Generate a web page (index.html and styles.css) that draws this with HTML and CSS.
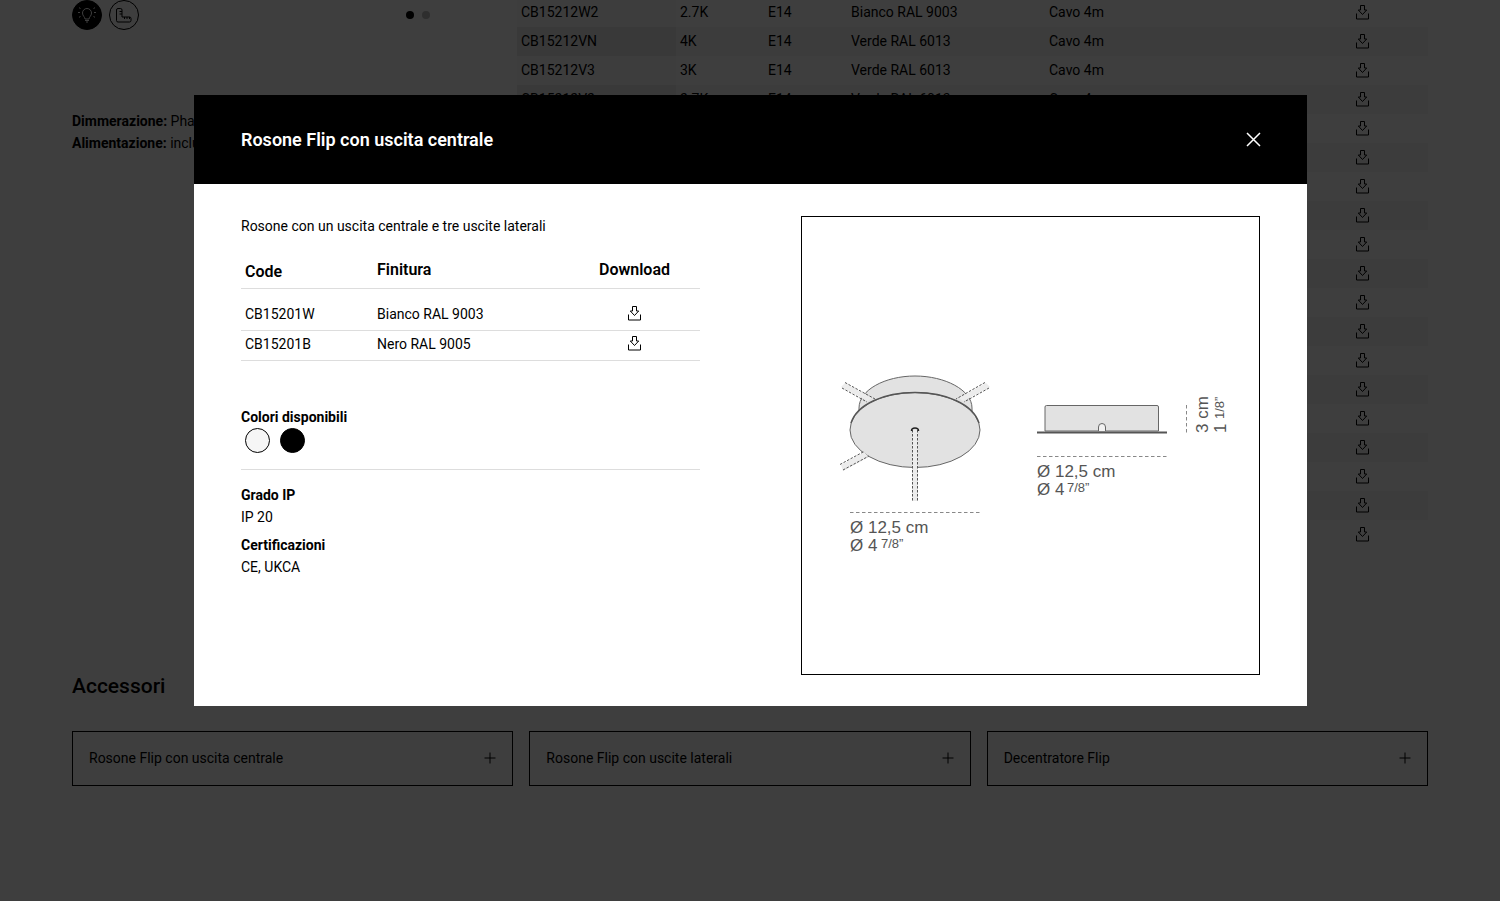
FILE: index.html
```html
<!DOCTYPE html>
<html lang="it">
<head>
<meta charset="utf-8">
<title>Flip – Accessori</title>
<link rel="stylesheet" href="styles.css">
</head>
<body>
<svg class="defs" aria-hidden="true">
  <symbol id="download" viewBox="0 0 15 17">
    <path d="M5.500 1.500h4v4.500h2.200L7.500 10.500 3.300 6h2.200zM1.500 9.500v5.500h12V9.500"/>
  </symbol>
  <symbol id="plus" viewBox="0 0 12 12"><path d="M6 0.500v11M0.500 6h11"/></symbol>
</svg>

<main class="page">
  <section class="product">
    <div class="gallery">
      <div class="controls">
        <button class="round round-on" aria-label="Foto">
          <svg viewBox="0 0 28 28"><path d="M12 18c0-2-2.500-3-2.500-6a4.500 4.500 0 0 1 9 0c0 3-2.500 4-2.500 6zM12 19.500h4M13 21h2M7.500 7.500l-1.500-.8M7 11.500H5M7.500 15.500l-1.500.8M20.500 7.500l1.500-.8M21 11.500h2M20.500 15.500l1.500.8"/></svg>
        </button>
        <button class="round" aria-label="Misure">
          <svg viewBox="0 0 28 28"><path d="M8 7.500h2.500q1.500 0 1.500 1.500v7h7.500q1.500 0 1.500 1.500v2q0 1.500-1.500 1.500h-11.500q-1.500 0-1.500-1.500v-10.500q0-1.500 1.500-1.500zM9.500 10.500h2.500M9.500 13h2.500M14.500 16v2M17 16v2M19.500 16v2"/></svg>
        </button>
        <div class="dots"><span class="dot dot-on"></span><span class="dot"></span></div>
      </div>
      <p class="specs"><b>Dimmerazione:</b> Phase cut<br><b>Alimentazione:</b> inclusa</p>
    </div>
    <table class="codes">
      <colgroup><col class="c-code"><col class="c-temp"><col class="c-base"><col class="c-fin"><col class="c-cable"><col class="c-dl"></colgroup>
      <tbody>
        <tr><td>CB15212W2</td><td>2.7K</td><td>E14</td><td>Bianco RAL 9003</td><td>Cavo 4m</td><td><svg class="dl"><use href="#download"/></svg></td></tr>
        <tr><td>CB15212VN</td><td>4K</td><td>E14</td><td>Verde RAL 6013</td><td>Cavo 4m</td><td><svg class="dl"><use href="#download"/></svg></td></tr>
        <tr><td>CB15212V3</td><td>3K</td><td>E14</td><td>Verde RAL 6013</td><td>Cavo 4m</td><td><svg class="dl"><use href="#download"/></svg></td></tr>
        <tr><td>CB15212V2</td><td>2.7K</td><td>E14</td><td>Verde RAL 6013</td><td>Cavo 4m</td><td><svg class="dl"><use href="#download"/></svg></td></tr>
        <tr><td></td><td></td><td></td><td></td><td></td><td><svg class="dl"><use href="#download"/></svg></td></tr>
        <tr><td></td><td></td><td></td><td></td><td></td><td><svg class="dl"><use href="#download"/></svg></td></tr>
        <tr><td></td><td></td><td></td><td></td><td></td><td><svg class="dl"><use href="#download"/></svg></td></tr>
        <tr><td></td><td></td><td></td><td></td><td></td><td><svg class="dl"><use href="#download"/></svg></td></tr>
        <tr><td></td><td></td><td></td><td></td><td></td><td><svg class="dl"><use href="#download"/></svg></td></tr>
        <tr><td></td><td></td><td></td><td></td><td></td><td><svg class="dl"><use href="#download"/></svg></td></tr>
        <tr><td></td><td></td><td></td><td></td><td></td><td><svg class="dl"><use href="#download"/></svg></td></tr>
        <tr><td></td><td></td><td></td><td></td><td></td><td><svg class="dl"><use href="#download"/></svg></td></tr>
        <tr><td></td><td></td><td></td><td></td><td></td><td><svg class="dl"><use href="#download"/></svg></td></tr>
        <tr><td></td><td></td><td></td><td></td><td></td><td><svg class="dl"><use href="#download"/></svg></td></tr>
        <tr><td></td><td></td><td></td><td></td><td></td><td><svg class="dl"><use href="#download"/></svg></td></tr>
        <tr><td></td><td></td><td></td><td></td><td></td><td><svg class="dl"><use href="#download"/></svg></td></tr>
        <tr><td></td><td></td><td></td><td></td><td></td><td><svg class="dl"><use href="#download"/></svg></td></tr>
        <tr><td></td><td></td><td></td><td></td><td></td><td><svg class="dl"><use href="#download"/></svg></td></tr>
        <tr><td></td><td></td><td></td><td></td><td></td><td><svg class="dl"><use href="#download"/></svg></td></tr>
      </tbody>
    </table>
  </section>

  <section>
    <h2 class="heading">Accessori</h2>
    <div class="cards">
      <button class="card">Rosone Flip con uscita centrale<svg class="plus"><use href="#plus"/></svg></button>
      <button class="card">Rosone Flip con uscite laterali<svg class="plus"><use href="#plus"/></svg></button>
      <button class="card">Decentratore Flip<svg class="plus"><use href="#plus"/></svg></button>
    </div>
  </section>
</main>

<div class="overlay">
  <div class="modal" role="dialog" aria-labelledby="modal-title">
    <header class="modal-head">
      <h3 class="modal-title" id="modal-title">Rosone Flip con uscita centrale</h3>
      <button class="close" aria-label="Chiudi"><svg viewBox="0 0 15 15"><path d="M1 1l13 13M14 1L1 14"/></svg></button>
    </header>
    <div class="modal-body">
      <div class="info">
        <p class="desc">Rosone con un uscita centrale e tre uscite laterali</p>
        <table class="variants">
          <thead><tr><th class="v-code">Code</th><th>Finitura</th><th class="v-dl">Download</th></tr></thead>
          <tbody>
            <tr><td>CB15201W</td><td>Bianco RAL 9003</td><td class="v-dl"><a href="#" aria-label="Scarica CB15201W"><svg class="dl"><use href="#download"/></svg></a></td></tr>
            <tr><td>CB15201B</td><td>Nero RAL 9005</td><td class="v-dl"><a href="#" aria-label="Scarica CB15201B"><svg class="dl"><use href="#download"/></svg></a></td></tr>
          </tbody>
        </table>
        <div class="colors">
          <b>Colori disponibili</b>
          <div class="swatches"><span class="swatch"></span><span class="swatch swatch-black"></span></div>
        </div>
        <dl class="facts">
          <dt>Grado IP</dt><dd>IP 20</dd>
          <dt>Certificazioni</dt><dd>CE, UKCA</dd>
        </dl>
      </div>
      <div class="figure">
        <svg class="drawing" viewBox="0 0 457 457" role="img" aria-label="Disegno tecnico">
          <g class="shape">
            <path d="M57 191C57 173 83 159 113 159s57 14 57 32v14H57z"/>
            <ellipse cx="113" cy="213" rx="65" ry="37.500"/>
          </g>
          <path class="rim" d="M49 206C55 187 82 175.500 113 175.500S171 187 177 206"/>
          <g class="cable">
            <path class="fill" d="M43 166l27 15-4 3-27-14zM184 166l-27 15 4 3 27-14zM39 248l23-13 5 5-26 14zM110 213h6v71h-6z"/>
            <path class="dash" d="M43 165.500L73 182M40 171l25 14M183 165.500L154 182M187 171l-25 14M38 247.500l24-13M41 253l26-14M110.500 213v71M115.500 213v71"/>
          </g>
          <path class="hook" d="M109.500 214c0-4 7-4 7 0"/>
          <g class="shape">
            <path d="M243 214v-24q0-1.500 1.500-1.500h110.500q1.500 0 1.500 1.500v24z"/>
            <path class="notch" d="M296.500 214v-4a3.500 3.500 0 0 1 7 0v4"/>
          </g>
          <path class="plate" d="M235 215.500h130"/>
          <path class="dim" d="M48 295.500h130M235 239.500h130M384.500 188v28"/>
          <g class="label">
            <text x="48" y="316">Ø 12,5 cm</text>
            <text x="48" y="334">Ø 4 <tspan class="frac" x="79" y="331">7/8”</tspan></text>
            <text x="235" y="260">Ø 12,5 cm</text>
            <text x="235" y="278">Ø 4 <tspan class="frac" x="265" y="275">7/8”</tspan></text>
            <text transform="translate(406 216) rotate(-90)">3 cm</text>
            <text transform="translate(424 216) rotate(-90)">1 <tspan class="frac" x="14" y="-2">1/8”</tspan></text>
          </g>
        </svg>
      </div>
    </div>
  </div>
</div>
</body>
</html>
```

FILE: styles.css
```css
* { box-sizing: border-box; }
body {
  margin: 0;
  background: #fff;
  color: #000;
  font: 14px/22px Roboto, "Liberation Sans", sans-serif;
  overflow: hidden;
}
p, h2, h3, dl, dd { margin: 0; }
b, dt { font-weight: 700; }
button { font: inherit; color: inherit; cursor: pointer; }
table { width: 100%; border-collapse: collapse; table-layout: fixed; }
.defs { position: absolute; width: 0; height: 0; }

.dl { display: block; width: 15px; height: 17px; margin: 0 auto; fill: none; stroke: #000; stroke-width: 1; }

.page { padding: 0 72px; }
.product {
  display: grid;
  grid-template-columns: minmax(0, 358fr) minmax(0, 911fr);
  column-gap: 87px;
  align-items: start;
}
.controls { display: flex; align-items: center; gap: 7px; }
.round { width: 30px; height: 30px; padding: 0; border: 1px solid #000; border-radius: 50%; background: none; }
.round svg { display: block; width: 28px; height: 28px; fill: none; stroke: #000; }
.round-on { background: #000; }
.round-on svg { stroke: #fff; }
.dots { display: flex; gap: 8px; margin-left: auto; }
.dot { width: 8px; height: 8px; border-radius: 50%; background: #bbb; }
.dot-on { background: #000; }
.specs { margin-top: 80px; white-space: nowrap; }

.codes { margin-top: -2px; }
.codes td { height: 29px; padding: 0 4px 1px; }
.codes tr:nth-child(even) { background: #f6f6f6; }
.codes td:first-child { background: #fafafa; }
.codes tr:nth-child(even) td:first-child { background: #eaeaea; }
.c-code { width: 159px; }
.c-temp { width: 88px; }
.c-base { width: 83px; }
.c-fin { width: 198px; }
.c-dl { width: 132px; }

.heading { margin: 123px 0 31px; font-size: 21px; line-height: 28px; font-weight: 500; }
.cards { display: grid; grid-template-columns: repeat(3, minmax(0, 1fr)); gap: 16px; }
.card {
  display: flex;
  align-items: center;
  justify-content: space-between;
  height: 55px;
  padding: 0 16px 2px;
  border: 1px solid #000;
  background: none;
  text-align: left;
}
.plus { width: 12px; height: 12px; stroke: #000; }

.overlay { position: fixed; inset: 0; padding: 95px 193px 0 194px; background: rgba(0, 0, 0, .757); }
.modal { background: #fff; }
.modal-head {
  display: flex;
  align-items: center;
  justify-content: space-between;
  height: 89px;
  padding: 0 46px 0 47px;
  background: #000;
  color: #fff;
}
.modal-title { font-size: 18px; line-height: 24px; font-weight: 600; }
.close { padding: 0; border: 0; background: none; }
.close svg { display: block; width: 15px; height: 15px; stroke: #fff; stroke-width: 1.500; }
.modal-body {
  display: grid;
  grid-template-columns: 1fr 1fr;
  column-gap: 101px;
  padding: 32px 47px 31px;
}
.desc { line-height: 20px; }
.variants { margin-top: 13px; }
.variants th { height: 39px; padding: 3px 4px 0; border-bottom: 1px solid #ddd; font-size: 16px; font-weight: 600; text-align: left; }
.variants .v-code { width: 132px; padding-top: 7px; }
.variants .v-dl { width: 131px; text-align: center; }
.variants td { padding: 2px 4px 5px; border-bottom: 1px solid #ddd; }
.variants tbody tr:first-child td { padding-top: 14px; }
.colors { margin-top: 45px; padding-bottom: 16px; border-bottom: 1px solid #ddd; }
.swatches { display: flex; gap: 10px; padding-left: 4px; }
.swatch { width: 25px; height: 25px; border: 1px solid #000; border-radius: 50%; background: #f6f6f6; }
.swatch-black { background: #000; }
.facts { padding-top: 14px; }
.facts dd + dt { margin-top: 6px; }

.figure { aspect-ratio: 1; border: 1px solid #000; }
.drawing { display: block; width: 100%; }
.shape { fill: #e2e2e2; stroke: #666; stroke-width: 1; }
.rim { fill: none; stroke: #555; stroke-width: 1.500; }
.fill { fill: #ececec; }
.dash { fill: none; stroke: #555; stroke-width: 1; stroke-dasharray: 2.500 1.500; }
.hook { fill: none; stroke: #222; stroke-width: 1.500; }
.shape .notch { fill: #f2f2f2; }
.plate { stroke: #555; stroke-width: 2; }
.dim { fill: none; stroke: #888; stroke-dasharray: 3.500 2.500; }
.label { font: 17px "Liberation Sans", Arial, sans-serif; fill: #555; }
.frac { font-size: 13px; }
```
